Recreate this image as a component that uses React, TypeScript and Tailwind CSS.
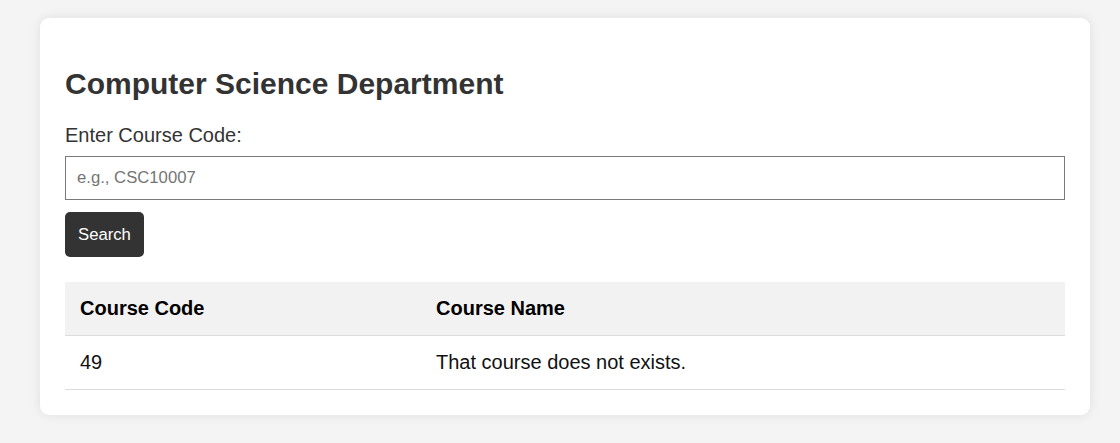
export default function App() {
  return (
    <div className="min-h-screen bg-[#f4f4f4] pt-[18px] pb-[28px] font-['Liberation_Sans',Arial,sans-serif]">
      <div className="ml-[40px] w-[1050px] rounded-[9px] bg-white px-[25px] pt-[25px] pb-[25px] shadow-[0_0_12px_rgba(0,0,0,0.09)]">
        <h2 className="mt-[24px] mb-[23px] text-[30px] leading-[34px] font-bold text-[#333]">
          Computer Science Department
        </h2>

        <label className="block text-[20px] leading-[23px] text-[#333]">Enter Course Code:</label>
        <input
          type="text"
          placeholder="e.g., CSC10007"
          className="mt-[9px] block h-[44px] w-full border border-[#7a7a7a] bg-white px-[11px] text-[16.7px] text-[#333] placeholder:text-[#757575] outline-none"
        />

        <button className="mt-[12px] h-[45px] rounded-[5px] bg-[#333] px-[13px] text-[16.7px] text-white">
          Search
        </button>

        <table className="mt-[25px] w-full border-collapse text-left text-[20px] leading-[23px]">
          <thead>
            <tr className="border-b border-[#ddd] bg-[#f2f2f2]">
              <th className="w-[356px] px-[15px] py-[15px] font-bold text-black">Course Code</th>
              <th className="px-[15px] py-[15px] font-bold text-black">Course Name</th>
            </tr>
          </thead>
          <tbody>
            <tr className="border-b border-[#ddd]">
              <td className="px-[15px] py-[15px] text-[#111]">49</td>
              <td className="px-[15px] py-[15px] text-[#111]">That course does not exists.</td>
            </tr>
          </tbody>
        </table>
      </div>
    </div>
  );
}
